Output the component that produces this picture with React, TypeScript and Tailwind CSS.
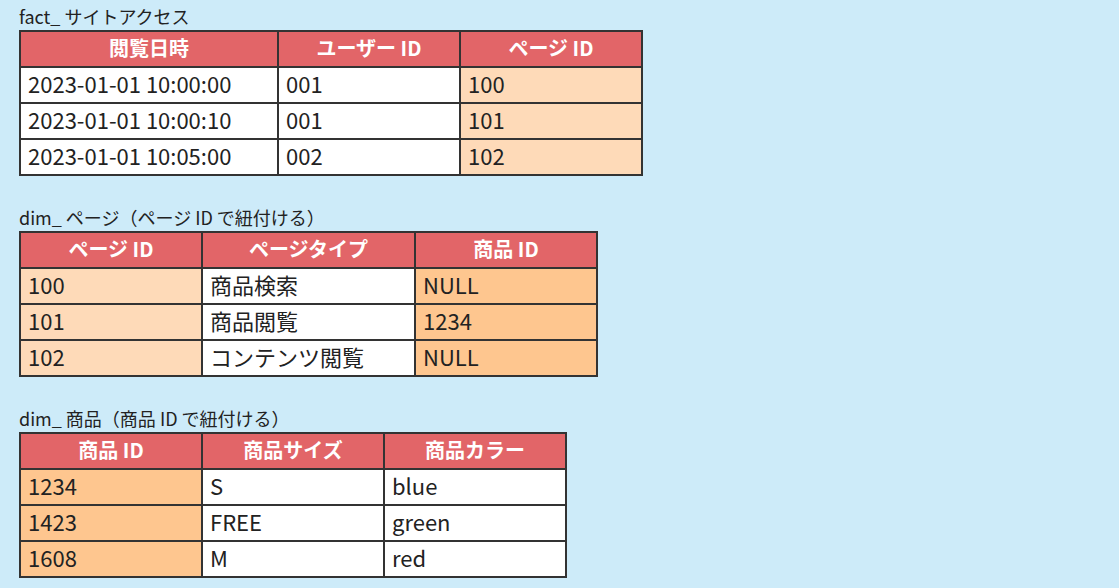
const font = { fontFamily: '"Noto Sans CJK JP", "Noto Sans", sans-serif' };

type Col = { label: string; width: number; bg: string };

function DataTable({ cols, rows }: { cols: Col[]; rows: string[][] }) {
  return (
    <table className="table-fixed border-collapse border-2 border-[#333333]">
      <colgroup>
        {cols.map((c, i) => (
          <col key={i} style={{ width: c.width }} />
        ))}
      </colgroup>
      <thead>
        <tr className="h-[36px] bg-[#e26568]">
          {cols.map((c, i) => (
            <th
              key={i}
              className="border-2 border-[#333333] px-0 pt-0 pb-[2px] text-center text-[20px] font-bold text-white leading-none"
            >
              {c.label}
            </th>
          ))}
        </tr>
      </thead>
      <tbody>
        {rows.map((r, ri) => (
          <tr key={ri} className="h-[36px]">
            {r.map((v, ci) => (
              <td
                key={ci}
                className={`border-2 border-[#333333] pt-0 pb-[4px] pl-[7px] text-[22px] text-[#222222] leading-none ${cols[ci].bg}`}
              >
                {v}
              </td>
            ))}
          </tr>
        ))}
      </tbody>
    </table>
  );
}

export default function App() {
  return (
    <div className="w-[1119px] h-[588px] bg-[#cdebf9] overflow-hidden pl-[19px] pt-[4px]" style={font}>
      <section>
        <h2 className="h-[26px] text-[18px] leading-[24px] text-[#222222]">fact_ サイトアクセス</h2>
        <DataTable
          cols={[
            { label: '閲覧日時', width: 258, bg: 'bg-white' },
            { label: 'ユーザー ID', width: 182, bg: 'bg-white' },
            { label: 'ページ ID', width: 182, bg: 'bg-[#fedab8]' },
          ]}
          rows={[
            ['2023-01-01 10:00:00', '001', '100'],
            ['2023-01-01 10:00:10', '001', '101'],
            ['2023-01-01 10:05:00', '002', '102'],
          ]}
        />
      </section>

      <section className="mt-[29px]">
        <h2 className="h-[26px] text-[18px] leading-[24px] text-[#222222]">dim_ ページ（ページ ID で紐付ける）</h2>
        <DataTable
          cols={[
            { label: 'ページ ID', width: 182, bg: 'bg-[#fedab8]' },
            { label: 'ページタイプ', width: 213, bg: 'bg-white' },
            { label: '商品 ID', width: 182, bg: 'bg-[#fec68f]' },
          ]}
          rows={[
            ['100', '商品検索', 'NULL'],
            ['101', '商品閲覧', '1234'],
            ['102', 'コンテンツ閲覧', 'NULL'],
          ]}
        />
      </section>

      <section className="mt-[29px]">
        <h2 className="h-[26px] text-[18px] leading-[24px] text-[#222222]">dim_ 商品（商品 ID で紐付ける）</h2>
        <DataTable
          cols={[
            { label: '商品 ID', width: 182, bg: 'bg-[#fec68f]' },
            { label: '商品サイズ', width: 182, bg: 'bg-white' },
            { label: '商品カラー', width: 182, bg: 'bg-white' },
          ]}
          rows={[
            ['1234', 'S', 'blue'],
            ['1423', 'FREE', 'green'],
            ['1608', 'M', 'red'],
          ]}
        />
      </section>
    </div>
  );
}
